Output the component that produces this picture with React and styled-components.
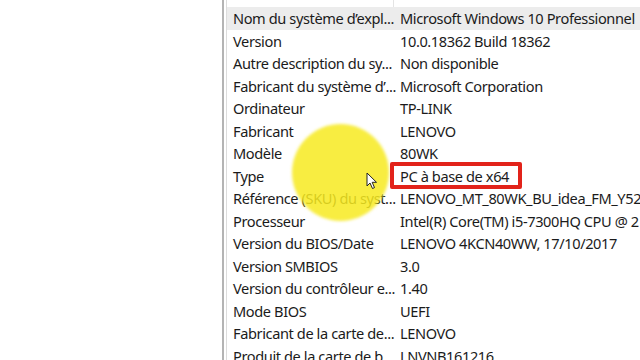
import React from 'react';
import styled, { createGlobalStyle } from 'styled-components';

const GlobalStyle = createGlobalStyle`
  html, body {
    margin: 0;
    padding: 0;
    background: #ffffff;
  }
  body {
    width: 640px;
    height: 360px;
    overflow: hidden;
    font-family: "Noto Sans", "Open Sans", sans-serif;
  }
`;

const TEXT = '#1b1b1b';
const ROW_H = 22.5;

// Layout
const Screen = styled.div`
  position: relative;
  display: flex;
  width: 640px;
  height: 360px;
  overflow: hidden;
  background: #ffffff;
`;

const TreePane = styled.div`
  width: 222px;
  height: 100%;
  background: #ffffff;
  border-right: 2px solid #b4b4b4;
`;

const ListPane = styled.div`
  flex: 1;
  display: flex;
  flex-direction: column;
  margin-left: 2px;
  border-left: 1px solid #dcdcdc;
  overflow: hidden;
`;

const HeaderRow = styled.div`
  display: grid;
  grid-template-columns: 167px 1fr;
  height: 7px;
  flex-shrink: 0;
`;

const HeaderCell = styled.div`
  border-right: ${(props) => (props.last ? 'none' : '1px solid #e4e4e4')};
`;

const Row = styled.div`
  display: grid;
  grid-template-columns: 167px 1fr;
  height: ${ROW_H}px;
  align-items: center;
  flex-shrink: 0;
  background: ${(props) => (props.selected ? '#ececec' : 'transparent')};
`;

const Cell = styled.div`
  padding-left: 6px;
  font-size: 14.6px;
  color: ${TEXT};
  white-space: nowrap;
  overflow: ${(props) => (props.name ? 'visible' : 'hidden')};
  letter-spacing: -0.4px;
`;

// Overlays
const Highlight = styled.div`
  position: absolute;
  left: 292px;
  top: 124px;
  width: 97px;
  height: 97px;
  border-radius: 50%;
  background: rgba(247, 234, 32, 0.85);
  filter: blur(1.5px);
  pointer-events: none;
`;

const RedBox = styled.div`
  position: absolute;
  left: 390px;
  top: 162px;
  width: 124px;
  height: 19px;
  border: 4px solid #e2231a;
  border-radius: 2px;
  pointer-events: none;
`;

const Cursor = styled.svg`
  position: absolute;
  left: 366px;
  top: 172px;
  width: 12px;
  height: 18px;
  pointer-events: none;
`;

const rows = [
  ['Nom du système d’expl...', 'Microsoft Windows 10 Professionnel'],
  ['Version', '10.0.18362 Build 18362'],
  ['Autre description du sy...', 'Non disponible'],
  ['Fabricant du système d’...', 'Microsoft Corporation'],
  ['Ordinateur', 'TP-LINK'],
  ['Fabricant', 'LENOVO'],
  ['Modèle', '80WK'],
  ['Type', 'PC à base de x64'],
  ['Référence (SKU) du syst...', 'LENOVO_MT_80WK_BU_idea_FM_Y520'],
  ['Processeur', 'Intel(R) Core(TM) i5-7300HQ CPU @ 2'],
  ['Version du BIOS/Date', 'LENOVO 4KCN40WW, 17/10/2017'],
  ['Version SMBIOS', '3.0'],
  ['Version du contrôleur e...', '1.40'],
  ['Mode BIOS', 'UEFI'],
  ['Fabricant de la carte de...', 'LENOVO'],
  ['Produit de la carte de b...', 'LNVNB161216'],
];

export default function App() {
  return (
    <>
      <GlobalStyle />
      <Screen>
        <TreePane />
        <ListPane>
          <HeaderRow>
            <HeaderCell />
            <HeaderCell last />
          </HeaderRow>
          {rows.map(([name, value], i) => (
            <Row key={i} selected={i === 0}>
              <Cell name>{name}</Cell>
              <Cell>{value}</Cell>
            </Row>
          ))}
        </ListPane>
        <Highlight />
        <RedBox />
        <Cursor viewBox="0 0 12 18">
          <path
            d="M1 1 L1 14 L4 11 L6.5 16.5 L8.5 15.6 L6.2 10.3 L10.5 10.3 Z"
            fill="#ffffff"
            stroke="#222222"
            strokeWidth="1"
            strokeLinejoin="round"
          />
        </Cursor>
      </Screen>
    </>
  );
}
